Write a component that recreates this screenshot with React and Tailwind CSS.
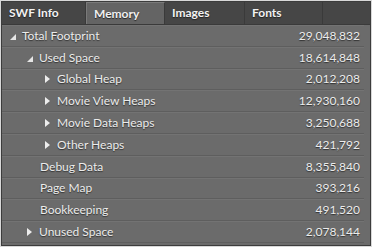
import React from "react";

const tabs = [
  { name: "SWF Info", w: "w-[84px]" },
  { name: "Memory", w: "w-[79px]" },
  { name: "Images", w: "w-[80px]" },
  { name: "Fonts", w: "w-[78px]" },
];

const rows = [
  { label: "Total Footprint", value: "29,048,832", level: 0, icon: "open" },
  { label: "Used Space", value: "18,614,848", level: 1, icon: "open" },
  { label: "Global Heap", value: "2,012,208", level: 2, icon: "closed" },
  { label: "Movie View Heaps", value: "12,930,160", level: 2, icon: "closed" },
  { label: "Movie Data Heaps", value: "3,250,688", level: 2, icon: "closed" },
  { label: "Other Heaps", value: "421,792", level: 2, icon: "closed" },
  { label: "Debug Data", value: "8,355,840", level: 1, icon: null },
  { label: "Page Map", value: "393,216", level: 1, icon: null },
  { label: "Bookkeeping", value: "491,520", level: 1, icon: null },
  { label: "Unused Space", value: "2,078,144", level: 1, icon: "closed" },
];

const indent = ["pl-[8px]", "pl-[25px]", "pl-[43px]"];

const Arrow = ({ type }) => {
  if (type === "open") {
    return (
      <svg width="6" height="6" viewBox="0 0 6 6" className="mr-[6px] mt-[2px]">
        <path d="M6 0 L6 6 L0 6 Z" fill="#e6e6e6" />
      </svg>
    );
  }
  if (type === "closed") {
    return (
      <svg width="5" height="8" viewBox="0 0 5 8" className="mr-[7px]">
        <path d="M0 0 L5 4 L0 8 Z" fill="#ededed" />
      </svg>
    );
  }
  return <span className="w-[12px]" />;
};

export default function App() {
  return (
    <div
      className="w-[372px] h-[247px] bg-[#d8d8d8] p-[1px] text-[12px]"
      style={{ fontFamily: "Lato, 'Open Sans', sans-serif" }}
    >
      <div className="h-full bg-[#6b6b6b] border border-[#3c3c3c] flex flex-col overflow-hidden">
        <div className="flex h-[23px] bg-[#464646] border-b border-[#3a3a3a]">
          {tabs.map((t, i) => (
            <div
              key={t.name}
              className={`${t.w} flex items-center pl-[7px] font-bold border-r border-[#3a3a3a] ${
                i === 1
                  ? "bg-[#646464] text-[#f0f0f0] border-l border-l-[#7a7a7a] border-t border-t-[#7a7a7a]"
                  : "text-[#f2f2f2]"
              }`}
              style={{ textShadow: "0 1px 1px #222" }}
            >
              {t.name}
            </div>
          ))}
          <div className="flex-1" />
        </div>
        <div className="flex-1 pr-[6px]">
          {rows.map((r) => (
            <div
              key={r.label}
              className={`h-[21.8px] flex items-center justify-between border-b border-[#5e5e5e] border-t border-t-[#737373] text-[#ececec] ${indent[r.level]}`}
              style={{ textShadow: "0 1px 1px #333" }}
            >
              <div className="flex items-center">
                <Arrow type={r.icon} />
                <span className={r.icon ? "" : "ml-[1px]"}>{r.label}</span>
              </div>
              <span className="pr-[4px]">{r.value}</span>
            </div>
          ))}
        </div>
      </div>
    </div>
  );
}
